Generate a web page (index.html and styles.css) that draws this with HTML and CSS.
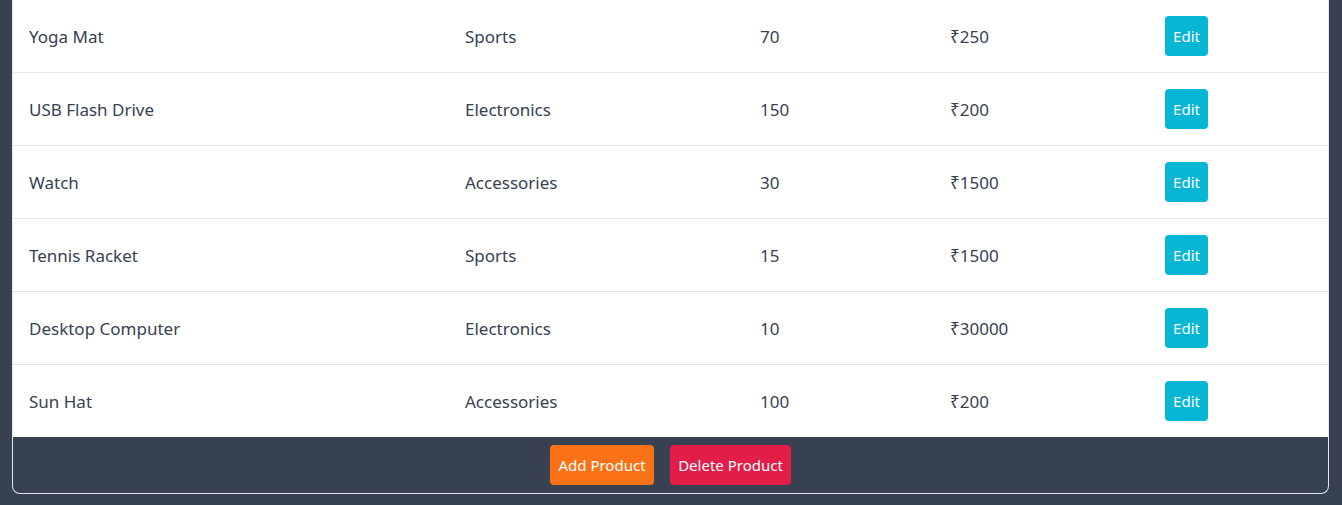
FILE: index.html
```html
<!DOCTYPE html>
<html>
<head>
<meta charset="utf-8">
<link rel="stylesheet" href="styles.css">
</head>
<body>
<div class="card">
  <table class="products">
    <colgroup>
      <col class="c1"><col class="c2"><col class="c3"><col class="c4"><col class="c5">
    </colgroup>
    <tbody>
      <tr><td>Yoga Mat</td><td>Sports</td><td>70</td><td>₹250</td><td><button class="btn edit">Edit</button></td></tr>
      <tr><td>USB Flash Drive</td><td>Electronics</td><td>150</td><td>₹200</td><td><button class="btn edit">Edit</button></td></tr>
      <tr><td>Watch</td><td>Accessories</td><td>30</td><td>₹1500</td><td><button class="btn edit">Edit</button></td></tr>
      <tr><td>Tennis Racket</td><td>Sports</td><td>15</td><td>₹1500</td><td><button class="btn edit">Edit</button></td></tr>
      <tr><td>Desktop Computer</td><td>Electronics</td><td>10</td><td>₹30000</td><td><button class="btn edit">Edit</button></td></tr>
      <tr><td>Sun Hat</td><td>Accessories</td><td>100</td><td>₹200</td><td><button class="btn edit">Edit</button></td></tr>
    </tbody>
  </table>
  <div class="footer">
    <button class="btn add">Add Product</button>
    <button class="btn del">Delete Product</button>
  </div>
</div>
</body>
</html>
```
FILE: styles.css
```css
html, body {
  margin: 0;
  padding: 0;
  background: #374151;
}
body {
  padding: 0 13px 11px 12px;
  font-family: "Noto Sans", "Open Sans", sans-serif;
  color: #374151;
}
.card {
  border: 1px solid #e5e7eb;
  border-top: none;
  border-radius: 0 0 8px 8px;
  overflow: hidden;
}
.products {
  width: 100%;
  border-collapse: collapse;
  background: #ffffff;
  table-layout: fixed;
}
.c1 { width: 436px; }
.c2 { width: 295px; }
.c3 { width: 190px; }
.c4 { width: 215px; }
.c5 { width: auto; }
.products td {
  height: 70px;
  padding: 2px 16px 0 16px;
  font-size: 17px;
  line-height: 24px;
  vertical-align: middle;
  border-bottom: 1px solid #e5e7eb;
}
.products td:last-child {
  padding-top: 1px;
  padding-bottom: 1px;
}
.products tr:last-child td {
  border-bottom: none;
}
.btn {
  border: none;
  border-radius: 4px;
  color: #ffffff;
  font-family: inherit;
  font-size: 15px;
  height: 40px;
  padding: 0 8px;
  cursor: pointer;
  display: block;
}
.edit {
  background: #06b6d4;
  width: 43px;
  padding: 0;
}
.footer {
  display: flex;
  justify-content: center;
  gap: 16px;
  padding: 8px 0;
  height: 40px;
}
.add { background: #f97316; width: 104px; }
.del { background: #e11d48; width: 121px; }
```
